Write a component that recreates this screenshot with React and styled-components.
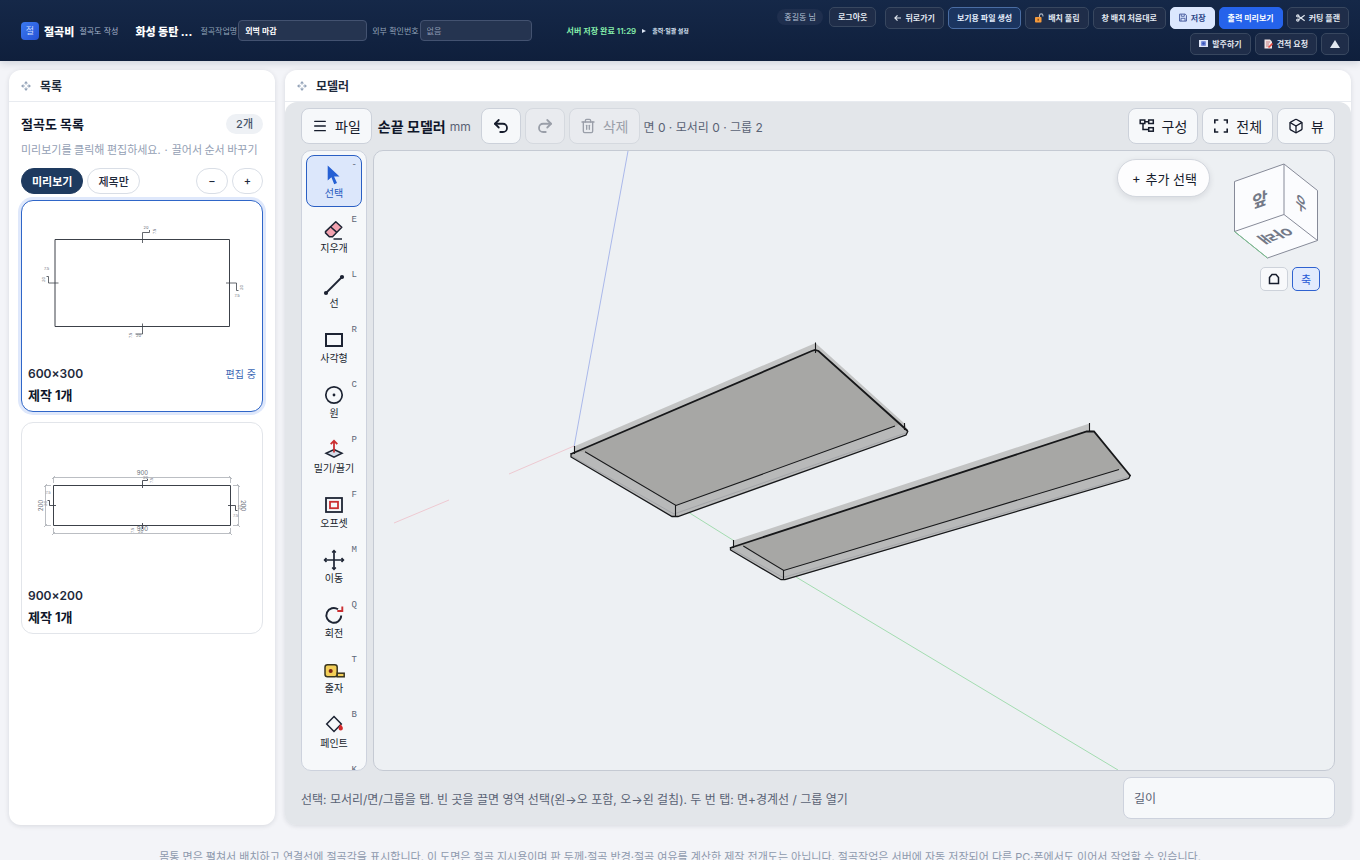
import { useState } from "react";
import styled, { createGlobalStyle, css } from "styled-components";
import { Box, Menu, Redo2, Trash2, Undo2 } from "lucide-react";

const GlobalStyle = createGlobalStyle`
  * {
    box-sizing: border-box;
  }
  body {
    margin: 0;
    background: #f3f4f8;
    color: #0f172a;
    font-family: Inter, "Noto Sans CJK KR", sans-serif;
    font-size: 12px;
  }
  button, input {
    font-family: inherit;
    margin: 0;
  }
  h1, h2, h3, p, ul {
    margin: 0;
    padding: 0;
    list-style: none;
  }
`;

/* ---------- 상단바 ---------- */

const Header = styled.header`
  display: flex;
  align-items: center;
  justify-content: space-between;
  min-height: 61px;
  padding: 6px 11px 6px 21px;
  background: linear-gradient(180deg, #152848 0%, #0f1f3c 100%);
  box-shadow: 0 2px 8px rgba(15, 31, 60, 0.16);
  color: #fff;
  white-space: nowrap;
`;
const HeaderInfo = styled.div`
  display: flex;
  align-items: center;
  min-width: 0;
`;
const Brand = styled.div`
  display: flex;
  align-items: center;
  gap: 5px;
  margin-right: 17px;
`;
const BrandMark = styled.span`
  display: grid;
  place-items: center;
  width: 18px;
  height: 18px;
  border-radius: 4px;
  background: linear-gradient(135deg, #3b7af0, #2551d6);
  color: #cfdcfb;
  font-size: 9px;
`;
const BrandName = styled.strong`
  font-size: 11px;
  font-weight: 800;
`;
const BrandSub = styled.span`
  color: #a9b6cc;
  font-size: 8px;
`;
const ProjectTitle = styled.h1`
  margin-right: 8px;
  font-size: 11px;
  font-weight: 800;
`;
const Field = styled.label`
  display: flex;
  align-items: center;
  gap: 1px;
  margin-right: 5px;
  color: #94a3b8;
  font-size: 8px;
`;
const FieldInput = styled.input`
  width: ${(props) => props.$width};
  height: 21px;
  padding: 0 6px;
  border: 1px solid #435270;
  border-radius: 4px;
  background: #253450;
  color: #fff;
  font-size: 8px;
  font-weight: 600;
  &::placeholder {
    color: #8d9ab0;
    font-weight: 400;
    opacity: 1;
  }
`;
const SaveState = styled.span`
  margin-left: 30px;
  color: #86efac;
  font-size: 8px;
  font-weight: 600;
`;
const SettingsToggle = styled.button`
  display: flex;
  align-items: center;
  gap: 6px;
  margin-left: 6px;
  padding: 0;
  border: 0;
  background: none;
  color: #dbe4f3;
  font-size: 6px;
  font-weight: 700;
`;
const HeaderSide = styled.div`
  display: flex;
  align-items: flex-start;
  gap: 9px;
`;
const Account = styled.div`
  display: flex;
  align-items: center;
  gap: 6px;
`;
const UserPill = styled.span`
  padding: 0 7px;
  border-radius: 9px;
  background: #1f2f4e;
  color: #b6c2d6;
  font-size: 8px;
  line-height: 16px;
`;
const Actions = styled.div`
  display: flex;
  flex-direction: column;
  align-items: flex-end;
  gap: 4px;
`;
const ActionRow = styled.div`
  display: flex;
  gap: 4px;
`;
const tones = {
  plain: css`
    border-color: #38475f;
    background: #1f2d49;
    color: #e2e8f0;
  `,
  outline: css`
    border-color: #4a6da3;
    background: #1b3560;
    color: #e2ecfb;
  `,
  light: css`
    border-color: #dbe7fe;
    background: #dbe7fe;
    color: #2b4586;
  `,
  primary: css`
    border-color: #2563eb;
    background: #2563eb;
    color: #fff;
  `,
};
const HeaderButton = styled.button`
  display: flex;
  align-items: center;
  justify-content: center;
  gap: 4px;
  height: ${(props) => (props.$small ? "20px" : "22px")};
  padding: 0 8px;
  border: 1px solid;
  border-radius: 5px;
  font-size: 8px;
  font-weight: 700;
  ${(props) => tones[props.$tone || "plain"]}
`;

/* ---------- 작업 영역 ---------- */

const Workspace = styled.main`
  display: grid;
  grid-template-columns: 266px minmax(0, 1fr);
  gap: 10px;
  height: calc(100vh - 96px);
  min-height: 480px;
  padding: 9px 9px 0;
`;
const Panel = styled.section`
  display: flex;
  flex-direction: column;
  min-height: 0;
  border-radius: 12px;
  background: #fff;
  box-shadow: 0 1px 5px rgba(15, 23, 42, 0.12);
  overflow: hidden;
`;
const PanelBar = styled.div`
  display: flex;
  align-items: center;
  gap: 9px;
  flex: none;
  height: 32px;
  padding: 0 12px;
  border-bottom: 1px solid #e8ebf0;
  color: #94a3b8;
`;
const PanelTitle = styled.h2`
  color: #1e293b;
  font-size: 12px;
  font-weight: 600;
`;
const ListBody = styled.div`
  padding: 12px;
`;
const ListHead = styled.div`
  display: flex;
  align-items: center;
  justify-content: space-between;
`;
const ListTitle = styled.h3`
  font-size: 13px;
  font-weight: 700;
  line-height: 18px;
`;
const Count = styled.span`
  padding: 0 10px;
  border-radius: 10px;
  background: #eef1f5;
  color: #475569;
  font-size: 11px;
  font-weight: 500;
  line-height: 20px;
`;
const Hint = styled.p`
  margin: 6px 0 10px;
  color: #94a0b4;
  font-family: "Noto Sans CJK KR", sans-serif;
  font-size: 11px;
  line-height: 18px;
  white-space: nowrap;
`;
const Filters = styled.div`
  display: flex;
  gap: 4px;
  margin-bottom: 6px;
`;
const Pill = styled.button`
  height: 26px;
  padding: 0 ${(props) => (props.$round ? "11px" : "10px")};
  border: 1px solid ${(props) => (props.$active ? "#1e3a5f" : "#d9dee6")};
  border-radius: 13px;
  background: ${(props) => (props.$active ? "#1e3a5f" : "#fff")};
  color: ${(props) => (props.$active ? "#fff" : "#1e293b")};
  font-size: 11px;
  font-weight: ${(props) => (props.$active ? 600 : 500)};
`;
const Spacer = styled.span`
  flex: 1;
`;
const CardList = styled.ul`
  display: flex;
  flex-direction: column;
  gap: 10px;
`;
const Card = styled.li`
  padding-bottom: 6px;
  border: 1px solid ${(props) => (props.$active ? "#2f66c8" : "#e2e5ea")};
  border-radius: 12px;
  background: #fff;
  box-shadow: ${(props) => (props.$active ? "0 0 0 3px #dfe8fb" : "none")};
`;
const Thumb = styled.svg`
  display: block;
  width: 100%;
`;
const CardRow = styled.div`
  display: flex;
  align-items: center;
  justify-content: space-between;
  height: 24px;
  padding: 0 6px;
`;
const CardName = styled.strong`
  color: #1e293b;
  font-size: 12px;
  font-weight: 600;
`;
const Editing = styled.span`
  color: #3b67b5;
  font-size: 10px;
`;
const CardMeta = styled.p`
  padding: 0 6px;
  font-size: 13px;
  font-weight: 700;
  line-height: 20px;
`;

/* ---------- 모델러 ---------- */

const ModelPanel = styled(Panel)`
  background: linear-gradient(#fff 60px, #e3e6ea 60px);
`;
const Modeler = styled.div`
  display: flex;
  flex-direction: column;
  flex: 1;
  min-height: 0;
  gap: 6px;
  padding: 6px 16px;
  border-radius: 12px;
  background: #e3e6ea;
`;
const Bar = styled.div`
  display: flex;
  align-items: center;
  gap: 4px;
  flex: none;
`;
const BarButton = styled.button`
  display: flex;
  align-items: center;
  justify-content: center;
  gap: 7px;
  min-width: 40px;
  height: 36px;
  padding: 0 10px;
  border: 1px solid #ccd1da;
  border-radius: 8px;
  background: #f6f8fa;
  color: #161c2c;
  font-size: 14px;
  &:disabled {
    border-color: #d5d9df;
    background: #e9ebef;
    color: #9a9fa9;
  }
`;
const AppName = styled.strong`
  margin-left: 2px;
  font-size: 14px;
  font-weight: 600;
`;
const EditGroup = styled.div`
  display: flex;
  gap: 4px;
  margin-left: 6px;
`;
const Muted = styled.span`
  color: #596274;
  font-size: 12px;
`;
const Stage = styled.div`
  display: flex;
  flex: 1;
  min-height: 0;
  gap: 6px;
`;
const ToolList = styled.nav`
  display: flex;
  flex-direction: column;
  gap: 3px;
  width: 66px;
  padding: 4px;
  border: 1px solid #cdd2dd;
  border-radius: 10px;
  background: #f6f8fa;
  overflow: hidden;
`;
const ToolButton = styled.button`
  position: relative;
  display: flex;
  flex: none;
  flex-direction: column;
  align-items: center;
  justify-content: center;
  height: 52px;
  padding: 0;
  border: 1px solid ${(props) => (props.$active ? "#2a5fc4" : "transparent")};
  border-radius: 8px;
  background: ${(props) => (props.$active ? "#dce7fb" : "none")};
  color: ${(props) => (props.$active ? "#2458bd" : "#161c2c")};
  font-size: 10px;
  line-height: 14px;
`;
const Shortcut = styled.kbd`
  position: absolute;
  top: 3px;
  right: 4px;
  color: #5d6677;
  font-family: "Liberation Mono", monospace;
  font-size: 9px;
  line-height: 12px;
`;
const Viewport = styled.div`
  position: relative;
  flex: 1;
  min-width: 0;
  border: 1px solid #c5cad3;
  border-radius: 10px;
  background: #edf0f3;
  overflow: hidden;
`;
const Scene = styled.svg`
  display: block;
  width: 100%;
  height: 100%;
`;
const AddSelect = styled.button`
  position: absolute;
  top: 8px;
  right: 124px;
  display: flex;
  align-items: center;
  gap: 5px;
  height: 38px;
  padding: 0 12px 0 14px;
  border: 1px solid #d3d7de;
  border-radius: 19px;
  background: #fdfdfe;
  box-shadow: 0 2px 6px rgba(15, 23, 42, 0.1);
  color: #161c2c;
  font-size: 13px;
`;
const Navigator = styled.div`
  position: absolute;
  top: 11px;
  right: 14px;
  display: flex;
  flex-direction: column;
  align-items: flex-end;
  gap: 7px;
`;
const NavButtons = styled.div`
  display: flex;
  gap: 4px;
`;
const NavButton = styled.button`
  display: grid;
  place-items: center;
  width: 28px;
  height: 24px;
  padding: 0;
  border: 1px solid ${(props) => (props.$active ? "#2f62d0" : "#cdd2da")};
  border-radius: 5px;
  background: ${(props) => (props.$active ? "#e2ebfd" : "#f8f9fb")};
  color: ${(props) => (props.$active ? "#2458d6" : "#161c2c")};
  font-size: 11px;
`;
const StatusBar = styled(Bar)`
  justify-content: space-between;
`;
const LengthInput = styled.input`
  width: 212px;
  height: 42px;
  padding: 0 10px;
  border: 1px solid #cdd2dd;
  border-radius: 8px;
  background: #f6f8fa;
  font-size: 12px;
  &::placeholder {
    color: #596274;
    opacity: 1;
  }
`;
const Footer = styled.footer`
  padding: 23px 0 12px;
  color: #8e99ad;
  font-size: 11px;
  line-height: 18px;
  text-align: center;
  white-space: nowrap;
`;

/* ---------- 아이콘 ---------- */

const GripIcon = () => (
  <svg width="10" height="10" viewBox="0 0 10 10" fill="currentColor">
    <path d="M5 0l2 2.4H3zM5 10l2-2.4H3zM0 5l2.4-2v4zM10 5L7.600 3v4z" />
    <path d="M4.600 2v1.800h.8V2zM4.600 6.200V8h.8V6.200zM2 4.600h1.800v.8H2zM6.200 4.600H8v.8H6.200z" />
  </svg>
);
const BackIcon = () => (
  <svg width="7" height="8" viewBox="0 0 7 8" fill="none" stroke="currentColor" strokeWidth="1.2">
    <path d="M7 4H1M3.500 1.300L.9 4l2.600 2.700" />
  </svg>
);
const UnlockIcon = () => (
  <svg width="10" height="10" viewBox="0 0 10 10">
    <path d="M5.500 4.500V2.600a1.700 1.700 0 0 1 3.400 0v1" fill="none" stroke="#aeb8c6" strokeWidth="1.100" />
    <rect x="1" y="4" width="6.500" height="5.500" rx=".8" fill="#f59a3c" />
    <path d="M4.200 5.700v2" stroke="#7a4312" strokeWidth="1.200" />
  </svg>
);
const DiskIcon = () => (
  <svg width="8" height="9" viewBox="0 0 8 9" fill="none" stroke="#4a5fa0">
    <path d="M.6 1.100h5.600l1.200 1.200v5.800H.6z" />
    <path d="M2.300 1.300v2h3v-2M2 8V5.300h4V8" strokeWidth=".9" />
  </svg>
);
const ScissorsIcon = () => (
  <svg width="9" height="8" viewBox="0 0 9 8" fill="none" stroke="currentColor" strokeWidth="1.200">
    <circle cx="1.800" cy="1.900" r="1.100" />
    <circle cx="1.800" cy="6.100" r="1.100" />
    <path d="M2.700 2.500L8.700 6.700M2.700 5.500L8.700 1.300" />
  </svg>
);
const MailIcon = () => (
  <svg width="9" height="7" viewBox="0 0 9 7">
    <rect width="9" height="7" fill="#dfe6f8" />
    <rect x="2" y="1" width="5" height="5" rx="1" fill="#7b8fd8" />
    <circle cx="4.500" cy="3.500" r="1.300" fill="#3552b8" />
  </svg>
);
const MemoIcon = () => (
  <svg width="9" height="10" viewBox="0 0 9 10">
    <path d="M.5.500H6L8 2.500V9.500H.5z" fill="#f1e3e4" />
    <path d="M2 3h4M2 5h3M2 7h3" stroke="#b66a70" strokeWidth=".8" />
    <path d="M4.500 8.500L8.500 4.500" stroke="#e2473f" strokeWidth="1.600" />
  </svg>
);
const TreeIcon = () => (
  <svg width="16" height="16" viewBox="0 0 16 16" fill="none" stroke="currentColor" strokeWidth="1.500">
    <rect x="1.200" y="2" width="4.600" height="3.500" />
    <rect x="9.700" y="2" width="4.600" height="3.500" />
    <rect x="9.700" y="9.700" width="4.600" height="3.500" />
    <path d="M6 3.700h3.700M4 5.500v6h5.700" />
  </svg>
);
const FitIcon = () => (
  <svg width="16" height="16" viewBox="0 0 16 16" fill="none" stroke="currentColor" strokeWidth="1.600">
    <path d="M1.800 5.500V2h3.500M10.700 2h3.500v3.500M14.200 10.500V14h-3.500M5.300 14H1.800v-3.500" />
  </svg>
);

const toolIcons = {
  select: <path d="M5.700 3.500V18.500l3.700-3.300 2.800 7 2.800-1.200-2.900-6.600h5.400z" fill="#2560d4" />,
  eraser: (
    <g stroke="#1d2433" strokeWidth="1.500" strokeLinejoin="round">
      <path d="M13.800 4.700l6 5.600-9.300 9.400H7.300l-3.800-3.800v-1.300z" fill="#f3a3b0" />
      <path d="M8.500 9.800l6.300 5.600M11.500 22H20" fill="none" />
    </g>
  ),
  line: (
    <g fill="#1d2433" stroke="#1d2433" strokeWidth="1.800">
      <path d="M4 21L20 5" />
      <circle cx="4" cy="21" r="1.200" />
      <circle cx="20" cy="5" r="1.200" />
    </g>
  ),
  rect: <rect x="4" y="7" width="16" height="12" fill="none" stroke="#1d2433" strokeWidth="2" />,
  circle: (
    <g>
      <circle cx="12" cy="13" r="8.200" fill="none" stroke="#1d2433" strokeWidth="1.700" />
      <circle cx="12" cy="13" r="1.400" fill="#1d2433" />
    </g>
  ),
  push: (
    <g strokeWidth="1.500">
      <path d="M12 12.500l8 3.700-8 4-8-4z" fill="#d5deea" stroke="#1d2433" />
      <path d="M12 15.500V4M8.700 7.200L12 3.800l3.300 3.400" fill="none" stroke="#cb2f31" strokeWidth="1.800" />
    </g>
  ),
  offset: (
    <g fill="none" strokeWidth="1.800">
      <rect x="4" y="6" width="16" height="14" stroke="#1d2433" />
      <rect x="8" y="9.800" width="8" height="6.400" stroke="#cb2f31" />
    </g>
  ),
  move: (
    <g stroke="#1d2433" strokeWidth="1.700" fill="none">
      <path d="M12 4v18M3 13h18" />
      <path d="M10.200 5.500L12 3.700l1.800 1.800M10.200 20.500l1.800 1.800 1.800-1.800M4.500 11.200L2.700 13l1.800 1.800M19.500 11.200l1.800 1.800-1.800 1.800" />
    </g>
  ),
  rotate: (
    <g fill="none" strokeWidth="1.900">
      <path d="M16 7.300A7.400 7.400 0 1 0 19.200 13.500" stroke="#1d2433" />
      <path d="M15.300 9h5V4.500" stroke="#cb2f31" />
    </g>
  ),
  tape: (
    <g stroke="#3a3620" strokeWidth="1.500" fill="#f3cf58">
      <rect x="3" y="7.800" width="12.200" height="12" rx="2.500" />
      <rect x="15.200" y="16.200" width="7" height="3.600" />
      <circle cx="8.700" cy="14" r="1.300" fill="#7d2318" stroke="#7d2318" />
    </g>
  ),
  paint: (
    <g>
      <path d="M12 4.500l7.300 7.500-7.300 7.500L4.700 12z" fill="none" stroke="#1d2433" strokeWidth="1.500" />
      <path d="M18.600 12.300c1.500 2 2.300 2.900 2.300 3.900a2.200 2.200 0 0 1-4.400 0c0-1 .8-1.900 2.100-3.900z" fill="#d5292b" />
    </g>
  ),
};

const tools = [
  { id: "select", label: "선택", hotkey: "-" },
  { id: "eraser", label: "지우개", hotkey: "E" },
  { id: "line", label: "선", hotkey: "L" },
  { id: "rect", label: "사각형", hotkey: "R" },
  { id: "circle", label: "원", hotkey: "C" },
  { id: "push", label: "밀기/끌기", hotkey: "P" },
  { id: "offset", label: "오프셋", hotkey: "F" },
  { id: "move", label: "이동", hotkey: "M" },
  { id: "rotate", label: "회전", hotkey: "Q" },
  { id: "tape", label: "줄자", hotkey: "T" },
  { id: "paint", label: "페인트", hotkey: "B" },
  { id: "extra", label: "", hotkey: "K" },
];

/* ---------- 도면 ---------- */

const WideSheet = () => (
  <Thumb viewBox="22 201 240 160">
    <g fill="none" stroke="#3c4149">
      <path d="M55 239.500H229.500V326.500H55z" />
      <path d="M142.500 243V232.500H149.500V230M58.500 283H48.500V276.500H46.500M226 283H236.500V290.500H238.500M142.500 323.500V334H135.500" strokeWidth=".8" />
    </g>
    <g fill="#666c76" fontSize="4">
      <text x="143.500" y="229">20</text>
      <text x="156" y="234" transform="rotate(-90 156 234)">7.5</text>
      <text x="44" y="270">7.5</text>
      <text x="45" y="282" transform="rotate(-90 45 282)">20</text>
      <text x="242.500" y="290" transform="rotate(-90 242.500 290)">20</text>
      <text x="234.500" y="297">7.5</text>
      <text x="132" y="338" transform="rotate(-90 132 338)">7.5</text>
      <text x="136" y="337">20</text>
    </g>
  </Thumb>
);

const NarrowSheet = () => (
  <Thumb viewBox="22 423 240 160">
    <g fill="none" stroke="#a9adb4" strokeWidth=".8">
      <path d="M53.500 483V477.500H230.500V483M53.500 528V533.500H230.500V528M51 485.500H45.500V525.500H51M233 485.500H238.500V525.500H233" />
      <path d="M52 479l3-3M229 476l3 3M52 535l3-3M229 532l3 3M44 487l3-3M44 527l3-3M237 484l3 3M237 524l3 3" />
    </g>
    <g fill="none" stroke="#3c4149">
      <path d="M53.500 485.500H230.500V525.500H53.500z" />
      <path d="M142.500 488V480.500H147.500V479M56 505.500H49.500V500.500H47.500M228 505.500H235.500V510.500H237.500M142.500 523V529" strokeWidth=".9" />
    </g>
    <g fill="#6a707a" fontSize="6" textAnchor="middle">
      <text x="142.500" y="475">900</text>
      <text x="142.500" y="531">900</text>
      <text x="43" y="505.500" transform="rotate(-90 43 505.500)">200</text>
      <text x="241" y="505.500" transform="rotate(90 241 505.500)">200</text>
    </g>
    <g fill="#7b808a" fontSize="4">
      <text x="143" y="479">20</text>
      <text x="153" y="483" transform="rotate(-90 153 483)">7.5</text>
      <text x="45.500" y="494">7.5</text>
      <text x="47" y="506" transform="rotate(-90 47 506)">20</text>
      <text x="241" y="510" transform="rotate(-90 241 510)">20</text>
      <text x="233" y="517">7.5</text>
      <text x="134" y="533" transform="rotate(-90 134 533)">7.5</text>
      <text x="138" y="533">20</text>
    </g>
  </Thumb>
);

const sheets = [
  { name: "600×300", count: 1, drawing: <WideSheet />, editing: true },
  { name: "900×200", count: 1, drawing: <NarrowSheet /> },
];

const ModelScene = () => (
  <Scene viewBox="374 151 960 619" preserveAspectRatio="xMidYMid slice">
    <path d="M628 151L574 447" stroke="#aab8ea" fill="none" />
    <path d="M574 446L509 474M449 500L394 523" stroke="#eec9d1" fill="none" />
    <path d="M688 512L736 542M796 577L1118 770" stroke="#a3dcb0" fill="none" />

    {/* 600×300 */}
    <path d="M574 446.500L815.500 343 905 424 907.700 431 574 454z" fill="#c3c4c4" />
    <path d="M571 453.500L811.700 350.500 818.500 350.500 907.700 431 906 435 678 516.500H672L571.700 457z" fill="#b8b9b9" />
    <path d="M574 453L811.700 351 818.500 351 902 424 895 426 676 505.500 585 451.500z" fill="#a7a7a5" />
    <path d="M571.500 456L674 514 906 433" stroke="#a0a1a6" fill="none" strokeWidth=".8" />
    <g fill="none" stroke="#17181a">
      <path d="M571 454L811.700 351 815 350 818.500 351 907.700 431" strokeWidth="1.800" />
      <path d="M571 453V457L672 516.500H678L906 435 908 431" strokeWidth="1.300" />
      <path d="M585 451.700L676 505.500 895 426M675.500 505.500V516M574.500 446V454M815.500 342.500V353M904.500 423V430" strokeWidth="1.100" />
    </g>

    {/* 900×200 */}
    <path d="M733.500 540.500L1089.500 423.500V430L1094 431 1130 475 734 548z" fill="#c3c4c4" />
    <path d="M730 547.500L1086.700 431H1094L1130.300 475.700 1128.700 478.500 785 580H781L730.700 550z" fill="#b8b9b9" />
    <path d="M733 547L1086.700 431H1094L1124 468 1119 469.500 783.700 570.500 743.300 546z" fill="#a7a7a5" />
    <path d="M732 549L783 577.500 1128 477" stroke="#a0a1a6" fill="none" strokeWidth=".8" />
    <g fill="none" stroke="#17181a">
      <path d="M730 548L1086.700 431.500H1094L1130.300 475.700" strokeWidth="1.800" />
      <path d="M730.500 547V550L781 579.700H785L1128.700 478.500 1130.500 475" strokeWidth="1.300" />
      <path d="M743.300 546L783.700 570.500 1119 469.500M783.500 570V580M733.500 540V548M1089.500 423V432" strokeWidth="1.100" />
    </g>
  </Scene>
);

const ViewCube = () => (
  <svg width="88" height="98" viewBox="1232 162 88 98">
    <path d="M1284 164L1317.500 190.500V240.500L1267.500 258 1234.500 231.500V181.500z" fill="#fbfcfe" stroke="#868a98" />
    <path d="M1284 164V214.500L1234.500 231.500M1284 214.500L1317.500 240.500" fill="none" stroke="#868a98" />
    <path d="M1234.500 231.500L1267.500 258" stroke="#79c58d" />
    <g fill="#737987" fontSize="17" fontWeight="600" textAnchor="middle">
      <text transform="matrix(.98 -.35 0 1 1260 206)">앞</text>
      <text transform="matrix(.67 .53 0 1 1301 210)">우</text>
      <text transform="matrix(-.98 .35 -.66 -.53 1271 232)">아래</text>
    </g>
  </svg>
);

export default function App() {
  const [tool, setTool] = useState("select");
  const [title, setTitle] = useState("외벽 마감");

  return (
    <>
      <GlobalStyle />
      <Header>
        <HeaderInfo>
          <Brand>
            <BrandMark>절</BrandMark>
            <BrandName>절곡비</BrandName>
            <BrandSub>절곡도 작성</BrandSub>
          </Brand>
          <ProjectTitle>화성 동탄 ...</ProjectTitle>
          <Field>
            절곡작업명
            <FieldInput $width="129px" value={title} onChange={(e) => setTitle(e.target.value)} />
          </Field>
          <Field>
            외부 확인번호
            <FieldInput $width="112px" placeholder="없음" />
          </Field>
          <SaveState>서버 저장 완료 11:29</SaveState>
          <SettingsToggle type="button">
            <svg width="4" height="4" viewBox="0 0 4 4" fill="currentColor">
              <path d="M0 0l4 2-4 2z" />
            </svg>
            출력·일괄 설정
          </SettingsToggle>
        </HeaderInfo>
        <HeaderSide>
          <Account>
            <UserPill>홍길동 님</UserPill>
            <HeaderButton type="button" $small>로그아웃</HeaderButton>
          </Account>
          <Actions>
            <ActionRow>
              <HeaderButton type="button"><BackIcon />뒤로가기</HeaderButton>
              <HeaderButton type="button" $tone="outline">보기용 파일 생성</HeaderButton>
              <HeaderButton type="button"><UnlockIcon />배치 풀림</HeaderButton>
              <HeaderButton type="button">창 배치 처음대로</HeaderButton>
              <HeaderButton type="button" $tone="light"><DiskIcon />저장</HeaderButton>
              <HeaderButton type="button" $tone="primary">출력 미리보기</HeaderButton>
              <HeaderButton type="button"><ScissorsIcon />커팅 플랜</HeaderButton>
            </ActionRow>
            <ActionRow>
              <HeaderButton type="button"><MailIcon />발주하기</HeaderButton>
              <HeaderButton type="button"><MemoIcon />견적 요청</HeaderButton>
              <HeaderButton type="button" aria-label="접기">
                <svg width="10" height="8" viewBox="0 0 10 8" fill="currentColor">
                  <path d="M5 0l5 8H0z" />
                </svg>
              </HeaderButton>
            </ActionRow>
          </Actions>
        </HeaderSide>
      </Header>

      <Workspace>
        <Panel>
          <PanelBar>
            <GripIcon />
            <PanelTitle>목록</PanelTitle>
          </PanelBar>
          <ListBody>
            <ListHead>
              <ListTitle>절곡도 목록</ListTitle>
              <Count>{sheets.length}개</Count>
            </ListHead>
            <Hint>미리보기를 클릭해 편집하세요. · 끌어서 순서 바꾸기</Hint>
            <Filters>
              <Pill type="button" $active>미리보기</Pill>
              <Pill type="button">제목만</Pill>
              <Spacer />
              <Pill type="button" $round>−</Pill>
              <Pill type="button" $round>+</Pill>
            </Filters>
            <CardList>
              {sheets.map((sheet) => (
                <Card key={sheet.name} $active={sheet.editing}>
                  {sheet.drawing}
                  <CardRow>
                    <CardName>{sheet.name}</CardName>
                    {sheet.editing && <Editing>편집 중</Editing>}
                  </CardRow>
                  <CardMeta>제작 {sheet.count}개</CardMeta>
                </Card>
              ))}
            </CardList>
          </ListBody>
        </Panel>

        <ModelPanel>
          <PanelBar>
            <GripIcon />
            <PanelTitle>모델러</PanelTitle>
          </PanelBar>
          <Modeler>
            <Bar>
              <BarButton type="button"><Menu size={16} />파일</BarButton>
              <AppName>손끝 모델러</AppName>
              <Muted>mm</Muted>
              <EditGroup>
                <BarButton type="button" aria-label="실행 취소"><Undo2 size={18} strokeWidth={2.4} /></BarButton>
                <BarButton type="button" aria-label="다시 실행" disabled><Redo2 size={18} strokeWidth={2.4} /></BarButton>
                <BarButton type="button" disabled><Trash2 size={16} />삭제</BarButton>
              </EditGroup>
              <Muted>면 0 · 모서리 0 · 그룹 2</Muted>
              <Spacer />
              <BarButton type="button"><TreeIcon />구성</BarButton>
              <BarButton type="button"><FitIcon />전체</BarButton>
              <BarButton type="button"><Box size={16} />뷰</BarButton>
            </Bar>
            <Stage>
              <ToolList>
                {tools.map(({ id, label, hotkey }) => (
                  <ToolButton
                    key={id}
                    type="button"
                    aria-label={label || hotkey}
                    $active={tool === id}
                    onClick={() => setTool(id)}
                  >
                    <svg width="24" height="24" viewBox="0 0 24 24">{toolIcons[id]}</svg>
                    {label}
                    <Shortcut>{hotkey}</Shortcut>
                  </ToolButton>
                ))}
              </ToolList>
              <Viewport>
                <ModelScene />
                <AddSelect type="button"><span>+</span>추가 선택</AddSelect>
                <Navigator>
                  <ViewCube />
                  <NavButtons>
                    <NavButton type="button" aria-label="처음 시점">
                      <svg width="12" height="12" viewBox="0 0 12 12" fill="none" stroke="currentColor" strokeWidth="1.500">
                        <path d="M1.500 10.500V4.500L4 1.500h4l2.500 3v6z" />
                      </svg>
                    </NavButton>
                    <NavButton type="button" $active>축</NavButton>
                  </NavButtons>
                </Navigator>
              </Viewport>
            </Stage>
            <StatusBar>
              <Muted>
                선택: 모서리/면/그룹을 탭. 빈 곳을 끌면 영역 선택(왼→오 포함, 오→왼 걸침). 두 번 탭: 면+경계선 / 그룹 열기
              </Muted>
              <LengthInput placeholder="길이" aria-label="길이" />
            </StatusBar>
          </Modeler>
        </ModelPanel>
      </Workspace>

      <Footer>
        몸통 면은 펼쳐서 배치하고 연결선에 절곡각을 표시합니다. 이 도면은 절곡 지시용이며 판 두께·절곡 반경·절곡 여유를 계산한 제작 전개도는 아닙니다. 절곡작업은 서버에 자동 저장되어 다른 PC·폰에서도 이어서 작업할 수 있습니다.
      </Footer>
    </>
  );
}
